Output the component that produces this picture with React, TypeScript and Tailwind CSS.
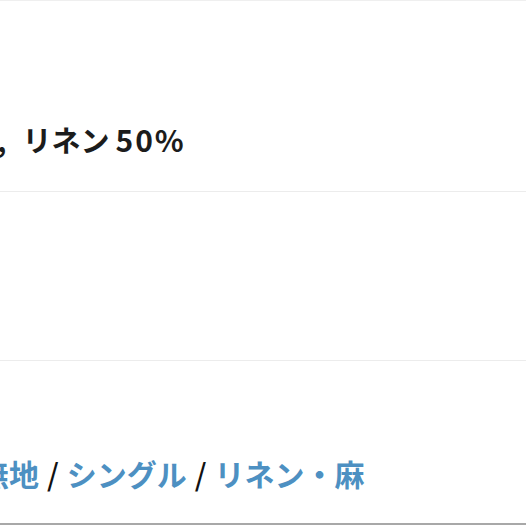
import React from "react";

export default function App() {
  const font = { fontFamily: '"Noto Sans CJK JP", "Noto Sans", sans-serif' };
  return (
    <div className="w-[526px] h-[526px] bg-white overflow-hidden" style={font}>
      <div className="border-t border-[#efefef]" />
      <div className="h-[191px] pt-[118px] border-b border-[#ececec] overflow-hidden">
        <div className="flex items-baseline text-[29px] leading-[40px] font-bold text-[#1c1c1c] whitespace-nowrap">
          <span className="-ml-[3px] mr-[16px]">,</span>
          <span>リネン</span>
          <span className="ml-[6px] text-[30px] tracking-[2px]">50%</span>
        </div>
      </div>
      <div className="h-[169px] border-b border-[#ececec]" />
      <div className="h-[162px] pt-[92px] overflow-hidden">
        <div className="flex items-baseline text-[30px] leading-[40px] font-bold whitespace-nowrap text-[#4d90c2] -ml-[21px]">
          <span>無地</span>
          <span className="mx-[8px] text-[#111] font-medium">/</span>
          <span>シングル</span>
          <span className="mx-[8px] text-[#111] font-medium">/</span>
          <span>リネン・麻</span>
        </div>
      </div>
      <div className="border-t-2 border-[#a8a8a8]" />
    </div>
  );
}
